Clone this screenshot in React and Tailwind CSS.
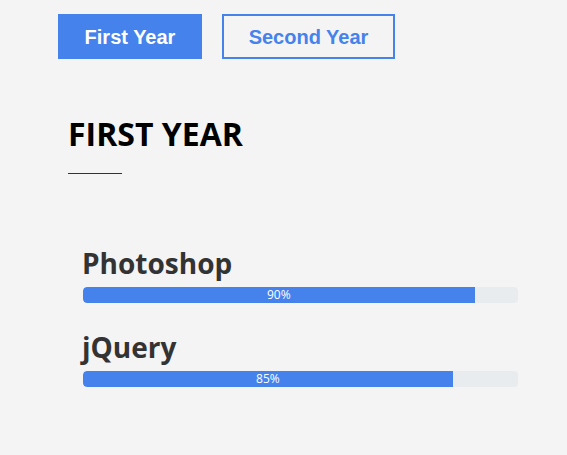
export default function App() {
  const skills = [
    { name: "Photoshop", pct: 90 },
    { name: "jQuery", pct: 85 },
  ];
  return (
    <div className="w-[567px] h-[455px] bg-[#f4f4f4] overflow-hidden">
      <div className="flex gap-[20px] pl-[58px] pt-[14px]">
        <button className="w-[144px] h-[45px] bg-[#4582ec] text-white text-[20px] font-bold font-['Liberation_Sans',sans-serif] border-2 border-[#4582ec]">
          First Year
        </button>
        <button className="w-[173px] h-[45px] bg-transparent text-[#4582ec] text-[20px] font-bold font-['Liberation_Sans',sans-serif] border-2 border-[#4582ec]">
          Second Year
        </button>
      </div>
      <div className="pl-[68px] pt-[55px]">
        <h2 className="text-[32px] leading-[40px] font-bold text-black font-['Open_Sans',sans-serif]">
          FIRST YEAR
        </h2>
        <div className="mt-[19px] w-[54px] h-px bg-[#333]" />
      </div>
      <div className="pl-[83px] pr-[49px] pt-[71px] flex flex-col gap-[26px] font-['Open_Sans',sans-serif]">
        {skills.map((s) => (
          <div key={s.name}>
            <h3 className="text-[28px] leading-[36px] font-bold text-[#333] -ml-px mb-[6px]">{s.name}</h3>
            <div className="h-[16px] rounded bg-[#e9ecef] overflow-hidden flex">
              <div
                className="h-full bg-[#4582ec] text-white text-[12px] leading-[16px] text-center rounded-l"
                style={{ width: `${s.pct}%` }}
              >
                {s.pct}%
              </div>
            </div>
          </div>
        ))}
      </div>
    </div>
  );
}
